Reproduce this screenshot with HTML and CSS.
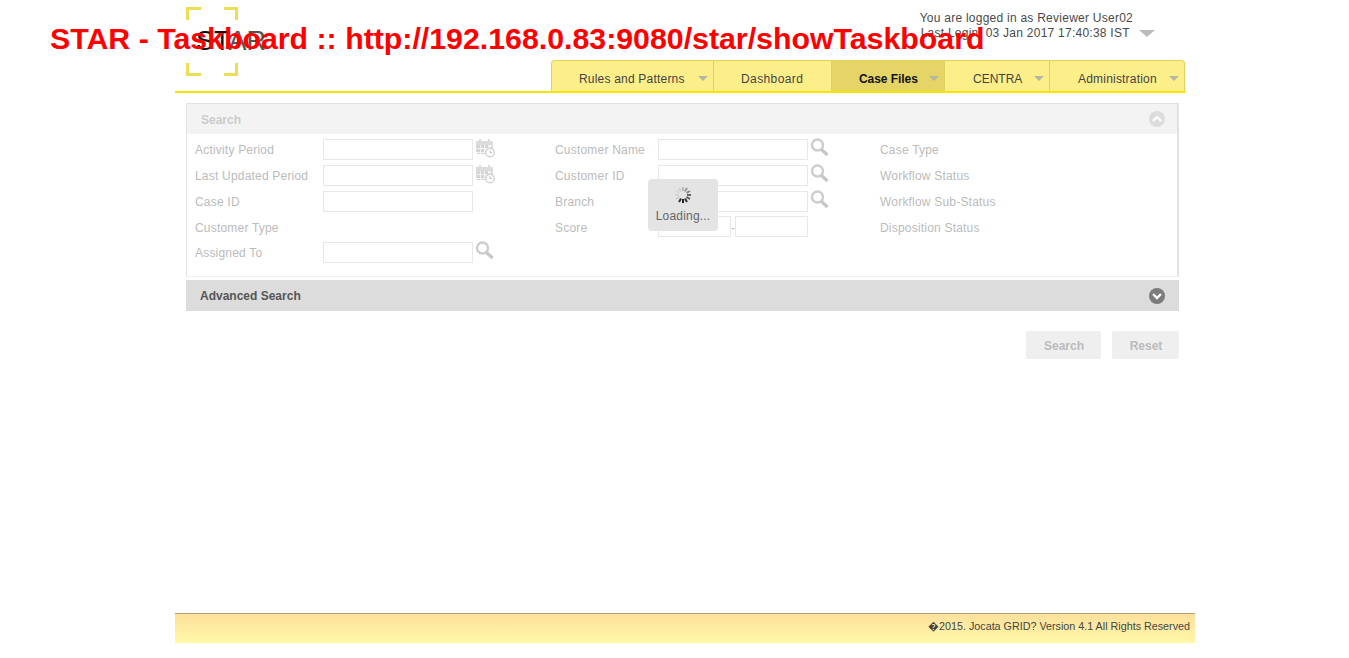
FILE: index.html
```html
<!DOCTYPE html>
<html lang="en">
  <head>
    <meta charset="UTF-8" />
    <title>STAR - Taskboard</title>
    <link rel="stylesheet" href="styles.css">
  </head>
  <body>
    <h1 class="page-url">STAR - Taskboard :: http://192.168.0.83:9080/star/showTaskboard</h1>

    <div class="wrapper">
      <header class="header">
        <div class="logo">
          <svg class="logo-frame" width="52" height="69" viewBox="0 0 52 69">
            <path d="M1.500 13V1.500H15M38 1.500H50.500V13M1.500 56V67.500H15M38 67.500H50.500V56" fill="none" stroke="#eddf55" stroke-width="3"/>
          </svg>
          <span class="logo-text">ST<span class="logo-light">AR</span></span>
        </div>
        <div class="user-info">
          <div class="user-lines">
            <div>You are logged in as Reviewer User02</div>
            <div class="last-login">Last Login: 03 Jan 2017 17:40:38 IST</div>
          </div>
          <span class="user-arrow"></span>
        </div>
      </header>

      <nav class="menu">
        <a class="menu-item item-rules">Rules and Patterns<span class="arrow"></span></a>
        <a class="menu-item item-dash">Dashboard</a>
        <a class="menu-item item-case active">Case Files<span class="arrow"></span></a>
        <a class="menu-item item-centra">CENTRA<span class="arrow"></span></a>
        <a class="menu-item item-admin">Administration<span class="arrow"></span></a>
      </nav>

      <main class="content">
        <section class="panel">
          <div class="panel-head">
            <span class="head-title">Search</span>
            <span class="round-btn">
              <svg width="16" height="16" viewBox="0 0 16 16"><path d="M4 10l4-4 4 4" fill="none" stroke="#fff" stroke-width="2.400"/></svg>
            </span>
          </div>
          <div class="search-grid">
            <label>Activity Period</label>
            <div class="field"><input type="text" /><svg class="ico" width="20" height="20" viewBox="0 0 20 20"><use href="#cal"/></svg></div>
            <label>Customer Name</label>
            <div class="field"><input type="text" /><svg class="ico" width="20" height="20" viewBox="0 0 20 20"><use href="#mag"/></svg></div>
            <label>Case Type</label>

            <label>Last Updated Period</label>
            <div class="field"><input type="text" /><svg class="ico" width="20" height="20" viewBox="0 0 20 20"><use href="#cal"/></svg></div>
            <label>Customer ID</label>
            <div class="field"><input type="text" /><svg class="ico" width="20" height="20" viewBox="0 0 20 20"><use href="#mag"/></svg></div>
            <label>Workflow Status</label>

            <label>Case ID</label>
            <div class="field"><input type="text" /></div>
            <label>Branch</label>
            <div class="field"><input type="text" /><svg class="ico" width="20" height="20" viewBox="0 0 20 20"><use href="#mag"/></svg></div>
            <label>Workflow Sub-Status</label>

            <label>Customer Type</label>
            <div class="field"></div>
            <label>Score</label>
            <div class="field score"><input type="text" /><span>-</span><input type="text" /></div>
            <label>Disposition Status</label>

            <label>Assigned To</label>
            <div class="field"><input type="text" /><svg class="ico" width="20" height="20" viewBox="0 0 20 20"><use href="#mag"/></svg></div>
          </div>
          <div class="loading">
            <svg width="18" height="18" viewBox="0 0 18 18">
              <g stroke-width="2" stroke-linecap="butt">
                <path d="M9 1v4" stroke="#bbb"/>
                <path d="M13 2l-2 3.500" stroke="#999"/>
                <path d="M16 5l-3.500 2" stroke="#888"/>
                <path d="M17 9h-4" stroke="#666"/>
                <path d="M16 13l-3.500-2" stroke="#555"/>
                <path d="M13 16l-2-3.500" stroke="#333"/>
                <path d="M9 17v-4" stroke="#222"/>
                <path d="M5 16l2-3.500" stroke="#333"/>
                <path d="M2 13l3.500-2" stroke="#ccc"/>
                <path d="M1 9h4" stroke="#d4d4d4"/>
                <path d="M2 5l3.500 2" stroke="#d8d8d8"/>
                <path d="M5 2l2 3.500" stroke="#d0d0d0"/>
              </g>
            </svg>
            <div>Loading...</div>
          </div>
        </section>

        <div class="advanced">
          <span>Advanced Search</span>
          <span class="round-btn dark">
            <svg width="16" height="16" viewBox="0 0 16 16"><path d="M4 6l4 4 4-4" fill="none" stroke="#fff" stroke-width="2.400"/></svg>
          </span>
        </div>

        <div class="actions">
          <button type="button">Search</button>
          <button type="button" class="reset">Reset</button>
        </div>
      </main>

      <footer class="footer">�2015. Jocata GRID? Version 4.1 All Rights Reserved</footer>
    </div>

    <svg class="defs" width="0" height="0">
      <symbol id="cal" viewBox="0 0 20 20">
        <path d="M1 3h3V1h2v2h7V1h2v2h3v11H1v2z" fill="#dcdcdc"/>
        <path d="M2 7h14v9H2z" fill="#f4f4f4"/>
        <path d="M2 7h3v3H2zM6 7h3v3H6zM10 7h3v3h-3zM2 11h3v3H2zM6 11h3v3H6zM2 15h3v1H2zM6 15h5v1H6z" fill="#d4d4d4"/>
        <circle cx="15" cy="14.500" r="4.200" fill="#fff" stroke="#d2d2d2" stroke-width="1.400"/>
        <path d="M15 12v2.500h2" fill="none" stroke="#c4c4c4"/>
      </symbol>
      <symbol id="mag" viewBox="0 0 20 20">
        <circle cx="7.500" cy="7" r="5.500" fill="none" stroke="#cdcdcd" stroke-width="2.400"/>
        <path d="M11.500 11.500l6 5.500" fill="none" stroke="#c6c6c6" stroke-width="3.200"/>
      </symbol>
    </svg>
  </body>
</html>
```

FILE: styles.css
```css
* {
  box-sizing: border-box;
}
body {
  margin: 0;
  background: #fff;
  font-family: "Liberation Sans", Arial, sans-serif;
  font-size: 12px;
  color: #444;
}
.page-url {
  position: absolute;
  left: 50px;
  top: 20px;
  margin: 0;
  font-size: 30.300px;
  line-height: 37px;
  font-weight: 700;
  color: #f00;
  white-space: nowrap;
  z-index: 5;
}
.wrapper {
  width: 1020px;
  margin-left: 175px;
}
.header {
  height: 60px;
  display: flex;
  justify-content: space-between;
}
.logo {
  position: relative;
  width: 100px;
  margin-left: 11px;
  padding-top: 7px;
}
.logo-frame {
  display: block;
}
.logo-text {
  position: absolute;
  left: 10px;
  top: 25px;
  font-size: 27px;
  line-height: 32px;
  color: #111;
}
.logo-light {
  color: #555;
}
.user-info {
  display: flex;
  align-items: flex-end;
  margin-right: 40px;
  padding-top: 11px;
  height: 40px;
  color: #4a4a4a;
  line-height: 14.500px;
}
.user-lines {
  font-size: 12px;
  letter-spacing: 0.250px;
}
.last-login {
  margin-left: 1px;
}
.user-arrow {
  width: 0;
  height: 0;
  margin: 0 0 3px 6px;
  border-left: 8px solid transparent;
  border-right: 8px solid transparent;
  border-top: 7px solid #bbb;
}
.menu {
  display: flex;
  justify-content: flex-end;
  width: 1010px;
  height: 33px;
  border-bottom: 2px solid #f4e600;
}
.menu-item {
  position: relative;
  display: block;
  height: 31px;
  line-height: 37px;
  background: #fcef8a;
  border: 1px solid #e0d05e;
  border-bottom: 0;
  border-left: 0;
  color: #444;
  font-size: 12px;
  letter-spacing: 0.200px;
}
.item-rules {
  width: 163px;
  padding-left: 27px;
  border-left: 1px solid #e0d05e;
  border-radius: 4px 0 0 0;
}
.item-dash {
  width: 118px;
  padding-left: 27px;
  letter-spacing: 0.400px;
}
.item-case {
  width: 113px;
  padding-left: 27px;
}
.item-centra {
  width: 105px;
  padding-left: 28px;
  letter-spacing: 0;
}
.item-admin {
  width: 135px;
  padding-left: 28px;
  border-radius: 0 4px 0 0;
}
.menu-item.active {
  background: #e5d567;
  color: #111;
  font-weight: 700;
  letter-spacing: -0.050px;
}
.arrow {
  position: absolute;
  right: 5px;
  top: 15px;
  width: 0;
  height: 0;
  border-left: 5px solid transparent;
  border-right: 5px solid transparent;
  border-top: 5px solid #b5b5a5;
}
.content {
  padding: 10px 16px 0 11px;
}
.panel {
  position: relative;
  height: 174px;
  border: 1px solid #e2e2e2;
  border-bottom: 1px solid #efefef;
  border-right-width: 2px;
}
.panel-head {
  display: flex;
  align-items: center;
  justify-content: space-between;
  height: 30px;
  padding: 0 12px 0 14px;
  background: #f3f3f3;
  color: #ccc;
  font-weight: 700;
}
.head-title {
  padding-top: 2px;
}
.round-btn {
  display: flex;
  align-items: center;
  justify-content: center;
  width: 16px;
  height: 16px;
  border-radius: 50%;
  background: #dcdcdc;
}
.round-btn.dark {
  background: #7b7b7b;
}
.search-grid {
  display: grid;
  grid-template-columns: 128px 232px 103px 222px 1fr;
  grid-template-rows: 26px 26px 26px 25px 26px;
  padding: 3px 0 0 8px;
  align-items: center;
}
.search-grid label {
  color: #bbb;
  font-size: 12px;
  letter-spacing: 0.200px;
}
.field {
  display: flex;
  align-items: center;
  height: 26px;
}
.field input {
  width: 150px;
  height: 21px;
  margin-bottom: 2px;
  padding: 0 4px;
  background: #fff;
  border: 1px solid #e8e8e8;
}
.ico {
  margin: 0 0 4px 2px;
  flex: none;
}
.score input {
  width: 73px;
}
.score span {
  width: 4px;
  color: #bbb;
  text-align: center;
}
.loading {
  position: absolute;
  left: 461px;
  top: 75px;
  width: 70px;
  height: 52px;
  padding-top: 7px;
  border-radius: 4px;
  background: #e4e4e4;
  text-align: center;
  line-height: 14px;
  letter-spacing: 0.200px;
  color: #666;
}
.loading svg {
  display: block;
  margin: 0 auto 5px;
}
.advanced {
  display: flex;
  align-items: center;
  justify-content: space-between;
  height: 31px;
  margin-top: 3px;
  padding: 0 14px;
  background: #dcdcdc;
  color: #555;
  font-weight: 700;
}
.actions {
  display: flex;
  justify-content: flex-end;
  gap: 11px;
  margin-top: 20px;
}
.actions button {
  width: 75px;
  height: 28px;
  padding: 2px 0 0 1px;
  border: 0;
  border-radius: 2px;
  background: #efefef;
  color: #bbb;
  font-family: inherit;
  font-size: 12px;
  font-weight: 700;
}
.actions .reset {
  width: 67px;
}
.footer {
  margin-top: 254px;
  height: 30px;
  padding: 6px 5px 0 0;
  border-top: 1px solid #b0a070;
  background: linear-gradient(#fde09c, #fff8a8);
  color: #444;
  font-size: 10.750px;
  line-height: 13px;
  text-align: right;
}
.defs {
  position: absolute;
}
```
